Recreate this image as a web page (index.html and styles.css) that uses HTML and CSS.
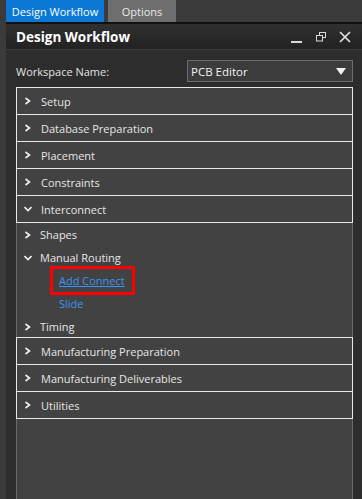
FILE: index.html
```html
<!DOCTYPE html>
<html lang="en">
<head>
    <meta charset="UTF-8">
    <meta name="viewport" content="width=device-width, initial-scale=1.0">
    <title>Design Workflow</title>
    <link rel="stylesheet" href="styles.css">
</head>
<body>
    <div class="app">
        <div class="edge"></div>
        <div class="main">
            <div class="tabs">
                <div class="tab active">Design Workflow</div>
                <div class="tab">Options</div>
            </div>

            <div class="titlebar">
                <span class="title">Design Workflow</span>
                <div class="win-buttons">
                    <svg class="btn-min" width="12" height="10" viewBox="0 0 12 10"><rect x="0" y="7" width="11" height="2" fill="#d8d8d8"/></svg>
                    <svg class="btn-restore" width="10" height="10" viewBox="0 0 10 10">
                        <rect x="3.5" y="0.5" width="6" height="5" fill="none" stroke="#d8d8d8"/>
                        <rect x="0.5" y="3.5" width="6" height="5.5" fill="#272727" stroke="#d8d8d8"/>
                    </svg>
                    <svg class="btn-close" width="12" height="12" viewBox="0 0 12 12"><path d="M1 1 L11 11 M11 1 L1 11" stroke="#e0e0e0" stroke-width="1.7"/></svg>
                </div>
            </div>

            <div class="content">
                <div class="ws-row">
                    <span class="ws-label">Workspace Name:</span>
                    <div class="select">
                        <span>PCB Editor</span>
                        <svg width="10" height="7" viewBox="0 0 10 7"><polygon points="0,0 10,0 5,7" fill="#f2f2f2"/></svg>
                    </div>
                </div>

                <div class="tree">
                    <div class="row"><svg class="chev" width="8" height="8" viewBox="0 0 8 8"><polyline points="1.5,1 5.5,4 1.5,7" fill="none" stroke="#f0f0f0" stroke-width="1.6"/></svg>Setup</div>
                    <div class="row"><svg class="chev" width="8" height="8" viewBox="0 0 8 8"><polyline points="1.5,1 5.5,4 1.5,7" fill="none" stroke="#f0f0f0" stroke-width="1.6"/></svg>Database Preparation</div>
                    <div class="row"><svg class="chev" width="8" height="8" viewBox="0 0 8 8"><polyline points="1.5,1 5.5,4 1.5,7" fill="none" stroke="#f0f0f0" stroke-width="1.6"/></svg>Placement</div>
                    <div class="row"><svg class="chev" width="8" height="8" viewBox="0 0 8 8"><polyline points="1.5,1 5.5,4 1.5,7" fill="none" stroke="#f0f0f0" stroke-width="1.6"/></svg>Constraints</div>
                    <div class="row open"><svg class="chev" width="8" height="8" viewBox="0 0 8 8"><polyline points="0.5,2 4,5.5 7.5,2" fill="none" stroke="#f0f0f0" stroke-width="1.6"/></svg>Interconnect</div>

                    <div class="sub">
                        <div class="sub-row"><svg class="chev" width="8" height="8" viewBox="0 0 8 8"><polyline points="1.5,1 5.5,4 1.5,7" fill="none" stroke="#f0f0f0" stroke-width="1.6"/></svg>Shapes</div>
                        <div class="sub-row"><svg class="chev" width="8" height="8" viewBox="0 0 8 8"><polyline points="0.5,2 4,5.5 7.5,2" fill="none" stroke="#f0f0f0" stroke-width="1.6"/></svg>Manual Routing</div>
                        <div class="sub-row leaf"><a class="link current" href="#">Add Connect</a></div>
                        <div class="sub-row leaf"><a class="link" href="#">Slide</a></div>
                        <div class="sub-row"><svg class="chev" width="8" height="8" viewBox="0 0 8 8"><polyline points="1.5,1 5.5,4 1.5,7" fill="none" stroke="#f0f0f0" stroke-width="1.6"/></svg>Timing</div>
                    </div>

                    <div class="row"><svg class="chev" width="8" height="8" viewBox="0 0 8 8"><polyline points="1.5,1 5.5,4 1.5,7" fill="none" stroke="#f0f0f0" stroke-width="1.6"/></svg>Manufacturing Preparation</div>
                    <div class="row"><svg class="chev" width="8" height="8" viewBox="0 0 8 8"><polyline points="1.5,1 5.5,4 1.5,7" fill="none" stroke="#f0f0f0" stroke-width="1.6"/></svg>Manufacturing Deliverables</div>
                    <div class="row last"><svg class="chev" width="8" height="8" viewBox="0 0 8 8"><polyline points="1.5,1 5.5,4 1.5,7" fill="none" stroke="#f0f0f0" stroke-width="1.6"/></svg>Utilities</div>
                </div>
            </div>
        </div>
    </div>
</body>
</html>
```

FILE: styles.css
```css
body {
    margin: 0;
    font-family: "Open Sans", "Noto Sans", sans-serif;
    font-size: 11px;
    color: #e6e6e6;
    background-color: #2d2d2d;
    overflow: hidden;
}
.app {
    display: flex;
    height: 100vh;
}
.edge {
    width: 6px;
    background-color: #3b3b3b;
}
.main {
    flex: 1;
    display: flex;
    flex-direction: column;
    min-width: 0;
}

/* tab strip */
.tabs {
    display: flex;
    gap: 4px;
    height: 22px;
    background-color: #3b3b3b;
    border-bottom: 2px solid #111;
}
.tab {
    display: flex;
    align-items: center;
    justify-content: center;
    padding: 0 4px;
    background-color: #6e6e6e;
    color: #eaeaea;
    width: 60px;
}
.tab.active {
    background-color: #0a78d4;
    color: #fff;
    width: 90px;
}

/* panel title */
.titlebar {
    display: flex;
    align-items: center;
    justify-content: space-between;
    height: 25px;
    padding: 0 11px 0 10px;
    background: linear-gradient(#303030, #222);
    border-bottom: 1px solid #3c3c3c;
}
.title {
    font-weight: bold;
    font-size: 13.5px;
    color: #fff;
}
.win-buttons {
    display: flex;
    align-items: center;
    gap: 13px;
}
.btn-min {
    margin-top: 4px;
}

/* content */
.content {
    flex: 1;
    display: flex;
    flex-direction: column;
    padding: 10px 9px 0 10px;
}
.ws-row {
    display: flex;
    align-items: center;
    justify-content: space-between;
    height: 22px;
    margin-bottom: 6px;
}
.ws-label {
    color: #e2e2e2;
}
.select {
    width: 155px;
    height: 20px;
    display: flex;
    align-items: center;
    justify-content: space-between;
    padding: 0 6px 0 3px;
    background-color: #3c3c3c;
    border: 1px solid #6c6c6c;
    color: #f2f2f2;
    font-size: 11.5px;
}

.tree {
    flex: 1;
    background-color: #424242;
    border-left: 1px solid #6a6a6a;
    border-right: 1px solid #6a6a6a;
}
.row {
    display: flex;
    align-items: center;
    height: 26px;
    margin: 0 -1px;
    padding-left: 7px;
    border: 1px solid #e8e8e8;
    border-bottom: none;
    color: #e6e6e6;
}
.row:first-child {
    margin-top: -1px;
}
.row.open,
.row.last {
    border-bottom: 1px solid #e8e8e8;
}
.chev {
    margin-right: 9px;
    flex-shrink: 0;
}

.sub {
    margin-bottom: -1px;
}
.sub-row {
    display: flex;
    align-items: center;
    height: 23px;
    padding-left: 7px;
}
.sub-row .chev {
    margin-right: 8px;
}
.sub-row.leaf {
    padding-left: 42px;
}
.link {
    color: #3895f5;
    text-decoration: none;
}
/* highlighted step */
.link.current {
    text-decoration: underline;
    padding: 4px 7px 4px 6px;
    margin: -4px -7px -4px -6px;
    outline: 3px solid #ff0000;
}
```
